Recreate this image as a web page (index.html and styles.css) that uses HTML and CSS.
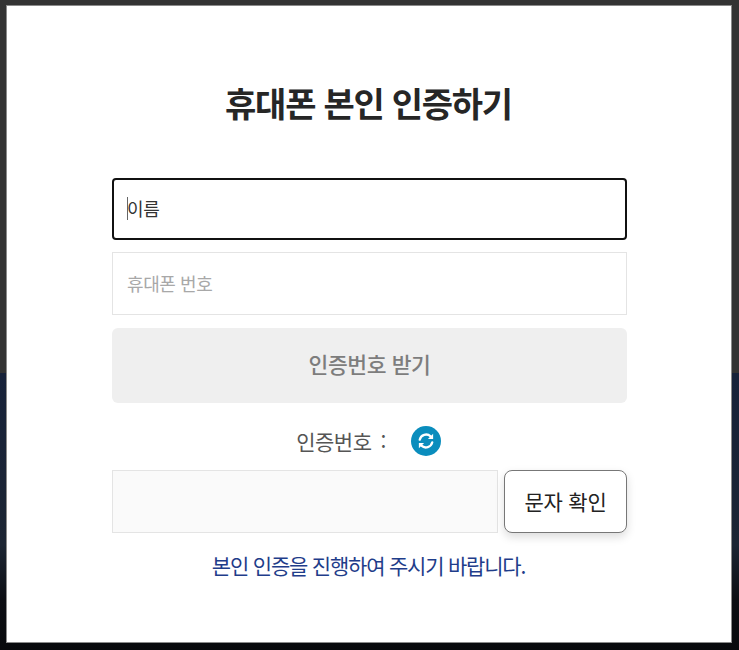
FILE: index.html
```html
<!DOCTYPE html>
<html lang="ko">
<head>
<meta charset="utf-8">
<title>휴대폰 본인 인증하기</title>
<link rel="stylesheet" href="styles.css">
</head>
<body>
<main class="modal">
  <h1 class="title">휴대폰 본인 인증하기</h1>
  <form class="form">
    <div class="field field-focus"><span class="caret"></span>이름</div>
    <div class="field field-empty">휴대폰 번호</div>
    <div class="submit">인증번호 받기</div>
    <div class="code-label">
      <span>인증번호</span>
      <span class="colon">:</span>
      <svg class="refresh" viewBox="0 0 32 32" aria-hidden="true">
        <circle cx="16" cy="16" r="16" fill="#0a8dbd"/>
        <path d="M9.3 14.6a7 7 0 0 1 11.6-3.6" fill="none" stroke="#fff" stroke-width="2.4" stroke-linecap="round"/>
        <path d="M23.6 8.2v5.6h-5.6z" fill="#fff"/>
        <path d="M22.7 17.4a7 7 0 0 1-11.6 3.6" fill="none" stroke="#fff" stroke-width="2.4" stroke-linecap="round"/>
        <path d="M8.4 23.8v-5.6h5.6z" fill="#fff"/>
      </svg>
    </div>
    <div class="code-row">
      <div class="code-input"></div>
      <div class="code-btn">문자 확인</div>
    </div>
    <p class="note">본인 인증을 진행하여 주시기 바랍니다.</p>
  </form>
</main>
</body>
</html>
```
FILE: styles.css
```css
* { box-sizing: border-box; }
html, body { margin: 0; height: 650px; overflow: hidden; }
body {
  background: linear-gradient(#333 0, #333 373px, #17223a 373px, #1c2533 545px, #0c0e13 600px, #08090c 650px);
  padding: 5px 7px 7px 6px;
  font-family: "Noto Sans CJK KR", "Noto Sans", sans-serif;
}
.modal {
  height: 638px;
  background: #fff;
  border: 1px solid #8a8a8a;
  padding: 0 104px 0 105px;
  display: flex;
  flex-direction: column;
}
.title {
  margin: 72px 0 0;
  height: 50px;
  line-height: 50px;
  padding-right: 2px;
  text-align: center;
  font-size: 34px;
  font-weight: 700;
  letter-spacing: -1.25px;
  color: #262626;
}
.form { margin-top: 50px; display: flex; flex-direction: column; }
.field {
  height: 62px;
  display: flex;
  align-items: center;
  padding: 0 0 2px 14px;
  font-size: 18px;
  letter-spacing: -0.4px;
  border: 1px solid #e4e4e4;
  color: #a8a8a8;
}
.field-focus { border: 2px solid #111; border-radius: 4px; color: #333; padding-left: 13px; position: relative; }
.caret { position: absolute; left: 13px; top: 17px; width: 1px; height: 23px; background: #666; }
.field-empty { margin-top: 12px; height: 63px; }
.submit {
  margin-top: 13px;
  height: 75px;
  display: flex;
  align-items: center;
  justify-content: center;
  padding-bottom: 4px;
  background: #efefef;
  border-radius: 6px;
  color: #7d7d7d;
  font-size: 21.5px;
  font-weight: 500;
  letter-spacing: -0.4px;
}
.code-label {
  margin-top: 21px;
  height: 34px;
  display: flex;
  align-items: center;
  justify-content: center;
  padding-right: 2px;
  color: #555;
  font-size: 21px;
  letter-spacing: -0.5px;
}
.colon { margin-left: 9px; }
.refresh { width: 30px; height: 30px; margin-left: 25px; }
.code-row { margin-top: 12px; display: flex; gap: 6px; height: 63px; }
.code-input { width: 386px; background: #fafafa; border: 1px solid #e4e4e4; }
.code-btn {
  flex: 1;
  display: flex;
  align-items: center;
  justify-content: center;
  padding-bottom: 2px;
  background: #fff;
  border: 1px solid #777;
  border-radius: 8px;
  box-shadow: 0 4px 10px rgba(0,0,0,.14);
  color: #222;
  font-size: 21px;
  letter-spacing: -0.2px;
}
.note {
  margin: 16px 0 0;
  padding-right: 2px;
  text-align: center;
  color: #1f3d8a;
  font-size: 21px;
  line-height: 32px;
  letter-spacing: -1.2px;
}
```
